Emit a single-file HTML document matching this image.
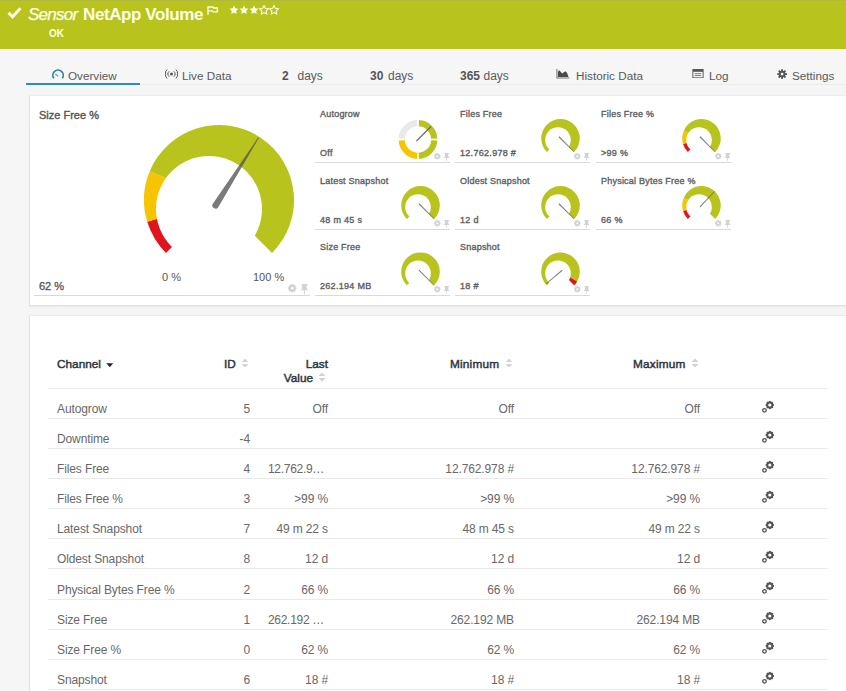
<!DOCTYPE html><html><head><meta charset="utf-8"><style>
*{margin:0;padding:0;box-sizing:border-box}
html,body{width:846px;height:691px;overflow:hidden;background:#f6f6f6;font-family:"Liberation Sans",sans-serif;position:relative}
.a{position:absolute;white-space:nowrap}
.gp{position:absolute}
#hdr{position:absolute;left:0;top:0;width:846px;height:49px;background:#b9c31d;border-top:1px solid #b1b93c}
.tab{position:absolute;top:69px;font-size:11.7px;color:#5a5a5a;line-height:14px}
.tab b{color:#555;font-size:12px}
.panel{position:absolute;background:#fff;border-left:1px solid #e2e2e2;box-shadow:0 1px 0 #e3e3e3,0 2px 1px #e9e9e9,0 -1px 1px #ededed}
.lbl{font-size:9px;color:#5e5e5e;font-weight:normal;-webkit-text-stroke:0.35px #5e5e5e;letter-spacing:0.22px}
.val{font-size:9px;color:#5e5e5e;font-weight:normal;-webkit-text-stroke:0.35px #5e5e5e;letter-spacing:0.3px}
.ln{position:absolute;height:1px;background:#d9d9d9}
.th{position:absolute;font-size:11.8px;font-weight:normal;-webkit-text-stroke:0.45px #2c3440;color:#2c3440;line-height:13.5px}
.td{position:absolute;font-size:12px;color:#686868;white-space:nowrap;letter-spacing:-0.12px}
.r{text-align:right}
</style></head><body>

<div id="hdr">
<svg class="a" style="left:7px;top:6px" width="15" height="12" viewBox="0 0 15 12"><path d="M1.5,5.8 L5.5,9.8 L13.5,1.2" stroke="#fdfde6" stroke-width="3" fill="none"/></svg>
<div class="a" style="left:28px;top:3px;font-size:17px;font-style:italic;color:#fdfde6;-webkit-text-stroke:0.25px #fdfde6;line-height:22px;letter-spacing:-0.75px">Sensor</div>
<div class="a" style="left:83px;top:3px;font-size:17px;font-weight:bold;color:#fdfde6;line-height:22px;letter-spacing:-0.4px">NetApp Volume</div>
<svg class="a" style="left:207px;top:5px" width="12" height="9" viewBox="0 0 12 9"><path d="M1,0.3 V9 M1,1 H5.8 L6.6,2 H10.4 V5.8 H6 L5.2,4.8 H1" stroke="#fdfde6" stroke-width="1.3" fill="none"/></svg>
<div class="a" style="left:49px;top:27px;font-size:10px;font-weight:bold;color:#fdfde6;line-height:12px">OK</div>

<svg class="a" style="left:229px;top:3.5px" width="54" height="11" viewBox="0 0 54 11"><polygon points="5.00,0.60 6.35,3.34 9.37,3.78 7.19,5.91 7.70,8.92 5.00,7.50 2.30,8.92 2.81,5.91 0.63,3.78 3.65,3.34" fill="#fdfde6"/><polygon points="15.00,0.60 16.35,3.34 19.37,3.78 17.19,5.91 17.70,8.92 15.00,7.50 12.30,8.92 12.81,5.91 10.63,3.78 13.65,3.34" fill="#fdfde6"/><polygon points="25.00,0.60 26.35,3.34 29.37,3.78 27.19,5.91 27.70,8.92 25.00,7.50 22.30,8.92 22.81,5.91 20.63,3.78 23.65,3.34" fill="#fdfde6"/><polygon points="35.00,0.60 36.35,3.34 39.37,3.78 37.19,5.91 37.70,8.92 35.00,7.50 32.30,8.92 32.81,5.91 30.63,3.78 33.65,3.34" fill="none" stroke="#fdfde6" stroke-width="1.1"/><polygon points="45.00,0.60 46.35,3.34 49.37,3.78 47.19,5.91 47.70,8.92 45.00,7.50 42.30,8.92 42.81,5.91 40.63,3.78 43.65,3.34" fill="none" stroke="#fdfde6" stroke-width="1.1"/></svg>
</div>

<svg class="a" style="left:51px;top:69px" width="14" height="11" viewBox="0 0 14 11"><path d="M2.8,9.3 A5.2,5.2 0 1 1 11.3,9.3" stroke="#2b82aa" stroke-width="1.7" fill="none"/><path d="M4.3,5 L7.2,7.2" stroke="#5a9fbf" stroke-width="1.1"/></svg>
<div class="tab" style="left:68px">Overview</div>
<div style="position:absolute;left:26px;top:83px;width:114px;height:2px;background:#2a8fbd"></div>
<div style="position:absolute;left:140px;top:84px;width:706px;height:1px;background:#ebebeb"></div>
<svg class="a" style="left:165px;top:69px" width="13" height="10" viewBox="0 0 13 10"><circle cx="6.5" cy="5" r="1.5" fill="#555"/><path d="M4.1,2.3 A3.6,3.6 0 0 0 4.1,7.7 M8.9,2.3 A3.6,3.6 0 0 1 8.9,7.7 M2.1,0.6 A6,6 0 0 0 2.1,9.4 M10.9,0.6 A6,6 0 0 1 10.9,9.4" stroke="#555" stroke-width="1" fill="none"/></svg>
<div class="tab" style="left:182px">Live Data</div>
<div class="tab" style="left:282px"><b>2</b></div><div class="tab" style="left:297.5px;font-size:12px">days</div>
<div class="tab" style="left:370px"><b>30</b></div><div class="tab" style="left:388px;font-size:12px">days</div>
<div class="tab" style="left:460px"><b>365</b></div><div class="tab" style="left:483.5px;font-size:12px">days</div>
<svg class="a" style="left:556px;top:69px" width="14" height="10" viewBox="0 0 14 10"><path d="M0.4,0 V9.6 H13.3 V8.6 H1.5 V0 Z" fill="#777"/><path d="M2,8 V2.8 L3.3,1.2 L6.2,4.6 L9.3,2.3 L11,3.7 L12.3,7.3 V8 Z" fill="#4a4a4a"/></svg>
<div class="tab" style="left:576px">Historic Data</div>
<svg class="a" style="left:692px;top:69px" width="12" height="9.3" viewBox="0 0 12 10"><rect x="0.5" y="0.5" width="11" height="9" fill="none" stroke="#555" stroke-width="1"/><rect x="0.5" y="0.5" width="11" height="2.5" fill="#555"/><path d="M2.5,5 H9.5 M2.5,7 H9.5" stroke="#555" stroke-width="0.8"/></svg>
<div class="tab" style="left:709px">Log</div>
<svg class="a" style="left:777px;top:69px" width="10.2" height="10.2" viewBox="0 0 11 11"><g fill="#555"><circle cx="5.5" cy="5.5" r="3.6"/><rect x="4.5" y="0.3" width="2" height="10.4" transform="rotate(0 5.5 5.5)"/><rect x="4.5" y="0.3" width="2" height="10.4" transform="rotate(45 5.5 5.5)"/><rect x="4.5" y="0.3" width="2" height="10.4" transform="rotate(90 5.5 5.5)"/><rect x="4.5" y="0.3" width="2" height="10.4" transform="rotate(135 5.5 5.5)"/></g><circle cx="5.5" cy="5.5" r="1.5" fill="#f6f6f6"/></svg>
<div class="tab" style="left:792px">Settings</div>

<div class="panel" style="left:29px;top:96px;width:817px;height:209px"></div>
<div class="a" style="left:39px;top:109px;font-size:11px;color:#555;-webkit-text-stroke:0.4px #555;letter-spacing:0px">Size Free %</div>
<svg class="a" style="left:0;top:0" width="846" height="691" viewBox="0 0 846 691">
<path d="M219.00,200.00 L165.97,253.03 A75,75 0 0 1 147.25,221.83 Z" fill="#e1131d"/>
<path d="M219.00,200.00 L147.25,221.83 A75,75 0 0 1 149.71,171.30 Z" fill="#f6c400"/>
<path d="M219.00,200.00 L149.71,171.30 A75,75 0 1 1 272.03,253.03 Z" fill="#b9c31e"/>
<circle cx="209.00" cy="209.00" r="53.00" fill="#fff"/>
<path d="M218.22,207.20 L258.99,137.73 L258.31,137.31 L212.82,203.77 A3.20,3.20 0 0 0 218.22,207.20 Z" fill="#555" fill-opacity="0.78"/>
</svg>
<div class="a" style="left:162px;top:271px;font-size:11px;color:#555">0 %</div>
<div class="a" style="left:253px;top:271px;font-size:11px;color:#555">100 %</div>
<div class="a" style="left:39px;top:280px;font-size:11px;color:#555;-webkit-text-stroke:0.3px #555">62 %</div>
<svg class="gp" style="left:288px;top:283.5px" width="22.1" height="10.4" viewBox="0 0 17 8"><g fill="#d2d2d2"><circle cx="3.25" cy="3.25" r="2.5"/><rect x="2.45" y="0" width="1.6" height="6.5" transform="rotate(0 3.25 3.25)"/><rect x="2.45" y="0" width="1.6" height="6.5" transform="rotate(45 3.25 3.25)"/><rect x="2.45" y="0" width="1.6" height="6.5" transform="rotate(90 3.25 3.25)"/><rect x="2.45" y="0" width="1.6" height="6.5" transform="rotate(135 3.25 3.25)"/></g><circle cx="3.25" cy="3.25" r="1.0" fill="#fff"/><path d="M10.6,0 h4.4 v1.1 h-0.7 v2.3 l1.3,1.5 h-2.6 v2.9 h-0.8 v-2.9 h-2.6 l1.3,-1.5 v-2.3 h-0.7 z" fill="#d2d2d2"/></svg>
<div class="ln" style="left:34px;top:295px;width:276px"></div>
<div class="a lbl" style="left:320px;top:108.5px">Autogrow</div>
<div class="a val" style="left:320px;top:147.7px">Off</div>
<svg class="gp" style="left:433.5px;top:152.5px" width="17.0" height="8.0" viewBox="0 0 17 8"><g fill="#d2d2d2"><circle cx="3.25" cy="3.25" r="2.5"/><rect x="2.45" y="0" width="1.6" height="6.5" transform="rotate(0 3.25 3.25)"/><rect x="2.45" y="0" width="1.6" height="6.5" transform="rotate(45 3.25 3.25)"/><rect x="2.45" y="0" width="1.6" height="6.5" transform="rotate(90 3.25 3.25)"/><rect x="2.45" y="0" width="1.6" height="6.5" transform="rotate(135 3.25 3.25)"/></g><circle cx="3.25" cy="3.25" r="1.0" fill="#fff"/><path d="M10.6,0 h4.4 v1.1 h-0.7 v2.3 l1.3,1.5 h-2.6 v2.9 h-0.8 v-2.9 h-2.6 l1.3,-1.5 v-2.3 h-0.7 z" fill="#d2d2d2"/></svg>
<div class="ln" style="left:315px;top:162px;width:135px"></div>
<div class="a lbl" style="left:460px;top:108.5px">Files Free</div>
<div class="a val" style="left:460px;top:147.7px">12.762.978 #</div>
<svg class="gp" style="left:573.5px;top:152.5px" width="17.0" height="8.0" viewBox="0 0 17 8"><g fill="#d2d2d2"><circle cx="3.25" cy="3.25" r="2.5"/><rect x="2.45" y="0" width="1.6" height="6.5" transform="rotate(0 3.25 3.25)"/><rect x="2.45" y="0" width="1.6" height="6.5" transform="rotate(45 3.25 3.25)"/><rect x="2.45" y="0" width="1.6" height="6.5" transform="rotate(90 3.25 3.25)"/><rect x="2.45" y="0" width="1.6" height="6.5" transform="rotate(135 3.25 3.25)"/></g><circle cx="3.25" cy="3.25" r="1.0" fill="#fff"/><path d="M10.6,0 h4.4 v1.1 h-0.7 v2.3 l1.3,1.5 h-2.6 v2.9 h-0.8 v-2.9 h-2.6 l1.3,-1.5 v-2.3 h-0.7 z" fill="#d2d2d2"/></svg>
<div class="ln" style="left:455px;top:162px;width:135px"></div>
<div class="a lbl" style="left:601px;top:108.5px">Files Free %</div>
<div class="a val" style="left:601px;top:147.7px">>99 %</div>
<svg class="gp" style="left:714.5px;top:152.5px" width="17.0" height="8.0" viewBox="0 0 17 8"><g fill="#d2d2d2"><circle cx="3.25" cy="3.25" r="2.5"/><rect x="2.45" y="0" width="1.6" height="6.5" transform="rotate(0 3.25 3.25)"/><rect x="2.45" y="0" width="1.6" height="6.5" transform="rotate(45 3.25 3.25)"/><rect x="2.45" y="0" width="1.6" height="6.5" transform="rotate(90 3.25 3.25)"/><rect x="2.45" y="0" width="1.6" height="6.5" transform="rotate(135 3.25 3.25)"/></g><circle cx="3.25" cy="3.25" r="1.0" fill="#fff"/><path d="M10.6,0 h4.4 v1.1 h-0.7 v2.3 l1.3,1.5 h-2.6 v2.9 h-0.8 v-2.9 h-2.6 l1.3,-1.5 v-2.3 h-0.7 z" fill="#d2d2d2"/></svg>
<div class="ln" style="left:596px;top:162px;width:135px"></div>
<div class="a lbl" style="left:320px;top:175.5px">Latest Snapshot</div>
<div class="a val" style="left:320px;top:214.7px">48 m 45 s</div>
<svg class="gp" style="left:433.5px;top:219.5px" width="17.0" height="8.0" viewBox="0 0 17 8"><g fill="#d2d2d2"><circle cx="3.25" cy="3.25" r="2.5"/><rect x="2.45" y="0" width="1.6" height="6.5" transform="rotate(0 3.25 3.25)"/><rect x="2.45" y="0" width="1.6" height="6.5" transform="rotate(45 3.25 3.25)"/><rect x="2.45" y="0" width="1.6" height="6.5" transform="rotate(90 3.25 3.25)"/><rect x="2.45" y="0" width="1.6" height="6.5" transform="rotate(135 3.25 3.25)"/></g><circle cx="3.25" cy="3.25" r="1.0" fill="#fff"/><path d="M10.6,0 h4.4 v1.1 h-0.7 v2.3 l1.3,1.5 h-2.6 v2.9 h-0.8 v-2.9 h-2.6 l1.3,-1.5 v-2.3 h-0.7 z" fill="#d2d2d2"/></svg>
<div class="ln" style="left:315px;top:229px;width:135px"></div>
<div class="a lbl" style="left:460px;top:175.5px">Oldest Snapshot</div>
<div class="a val" style="left:460px;top:214.7px">12 d</div>
<svg class="gp" style="left:573.5px;top:219.5px" width="17.0" height="8.0" viewBox="0 0 17 8"><g fill="#d2d2d2"><circle cx="3.25" cy="3.25" r="2.5"/><rect x="2.45" y="0" width="1.6" height="6.5" transform="rotate(0 3.25 3.25)"/><rect x="2.45" y="0" width="1.6" height="6.5" transform="rotate(45 3.25 3.25)"/><rect x="2.45" y="0" width="1.6" height="6.5" transform="rotate(90 3.25 3.25)"/><rect x="2.45" y="0" width="1.6" height="6.5" transform="rotate(135 3.25 3.25)"/></g><circle cx="3.25" cy="3.25" r="1.0" fill="#fff"/><path d="M10.6,0 h4.4 v1.1 h-0.7 v2.3 l1.3,1.5 h-2.6 v2.9 h-0.8 v-2.9 h-2.6 l1.3,-1.5 v-2.3 h-0.7 z" fill="#d2d2d2"/></svg>
<div class="ln" style="left:455px;top:229px;width:135px"></div>
<div class="a lbl" style="left:601px;top:175.5px">Physical Bytes Free %</div>
<div class="a val" style="left:601px;top:214.7px">66 %</div>
<svg class="gp" style="left:714.5px;top:219.5px" width="17.0" height="8.0" viewBox="0 0 17 8"><g fill="#d2d2d2"><circle cx="3.25" cy="3.25" r="2.5"/><rect x="2.45" y="0" width="1.6" height="6.5" transform="rotate(0 3.25 3.25)"/><rect x="2.45" y="0" width="1.6" height="6.5" transform="rotate(45 3.25 3.25)"/><rect x="2.45" y="0" width="1.6" height="6.5" transform="rotate(90 3.25 3.25)"/><rect x="2.45" y="0" width="1.6" height="6.5" transform="rotate(135 3.25 3.25)"/></g><circle cx="3.25" cy="3.25" r="1.0" fill="#fff"/><path d="M10.6,0 h4.4 v1.1 h-0.7 v2.3 l1.3,1.5 h-2.6 v2.9 h-0.8 v-2.9 h-2.6 l1.3,-1.5 v-2.3 h-0.7 z" fill="#d2d2d2"/></svg>
<div class="ln" style="left:596px;top:229px;width:135px"></div>
<div class="a lbl" style="left:320px;top:241.89999999999998px">Size Free</div>
<div class="a val" style="left:320px;top:281.09999999999997px">262.194 MB</div>
<svg class="gp" style="left:433.5px;top:285.9px" width="17.0" height="8.0" viewBox="0 0 17 8"><g fill="#d2d2d2"><circle cx="3.25" cy="3.25" r="2.5"/><rect x="2.45" y="0" width="1.6" height="6.5" transform="rotate(0 3.25 3.25)"/><rect x="2.45" y="0" width="1.6" height="6.5" transform="rotate(45 3.25 3.25)"/><rect x="2.45" y="0" width="1.6" height="6.5" transform="rotate(90 3.25 3.25)"/><rect x="2.45" y="0" width="1.6" height="6.5" transform="rotate(135 3.25 3.25)"/></g><circle cx="3.25" cy="3.25" r="1.0" fill="#fff"/><path d="M10.6,0 h4.4 v1.1 h-0.7 v2.3 l1.3,1.5 h-2.6 v2.9 h-0.8 v-2.9 h-2.6 l1.3,-1.5 v-2.3 h-0.7 z" fill="#d2d2d2"/></svg>
<div class="ln" style="left:315px;top:295px;width:135px"></div>
<div class="a lbl" style="left:460px;top:241.89999999999998px">Snapshot</div>
<div class="a val" style="left:460px;top:281.09999999999997px">18 #</div>
<svg class="gp" style="left:573.5px;top:285.9px" width="17.0" height="8.0" viewBox="0 0 17 8"><g fill="#d2d2d2"><circle cx="3.25" cy="3.25" r="2.5"/><rect x="2.45" y="0" width="1.6" height="6.5" transform="rotate(0 3.25 3.25)"/><rect x="2.45" y="0" width="1.6" height="6.5" transform="rotate(45 3.25 3.25)"/><rect x="2.45" y="0" width="1.6" height="6.5" transform="rotate(90 3.25 3.25)"/><rect x="2.45" y="0" width="1.6" height="6.5" transform="rotate(135 3.25 3.25)"/></g><circle cx="3.25" cy="3.25" r="1.0" fill="#fff"/><path d="M10.6,0 h4.4 v1.1 h-0.7 v2.3 l1.3,1.5 h-2.6 v2.9 h-0.8 v-2.9 h-2.6 l1.3,-1.5 v-2.3 h-0.7 z" fill="#d2d2d2"/></svg>
<div class="ln" style="left:455px;top:295px;width:135px"></div>
<svg class="a" style="left:0;top:0" width="846" height="691" viewBox="0 0 846 691"><path d="M398.62,138.55 A19.4,19.4 0 0 1 417.05,120.12 L417.36,126.32 A13.2,13.2 0 0 0 404.82,138.86 Z" fill="#e9e9e9"/>
<path d="M418.95,120.12 A19.4,19.4 0 0 1 437.38,138.55 L431.18,138.86 A13.2,13.2 0 0 0 418.64,126.32 Z" fill="#b9c31e"/>
<path d="M437.38,140.45 A19.4,19.4 0 0 1 418.95,158.88 L418.64,152.68 A13.2,13.2 0 0 0 431.18,140.14 Z" fill="#b9c31e"/>
<path d="M417.05,158.88 A19.4,19.4 0 0 1 398.62,140.45 L404.82,140.14 A13.2,13.2 0 0 0 417.36,152.68 Z" fill="#f6c400"/>
<path d="M416.50,141.00 L431.00,126.50" stroke="#666" stroke-width="1.1"/>
<path d="M560.50,138.30 L546.85,151.95 A19.3,19.3 0 1 1 574.15,151.95 Z" fill="#b9c31e"/>
<circle cx="558.00" cy="140.00" r="12.80" fill="#fff"/>
<path d="M558.80,137.43 L573.68,152.05 L574.25,151.48 L559.63,136.60 A0.58,0.58 0 0 0 558.80,137.43 Z" fill="#6a6a6a" fill-opacity="0.85"/>
<path d="M701.50,138.30 L687.85,151.95 A19.3,19.3 0 0 1 683.04,143.92 Z" fill="#e1131d"/>
<path d="M701.50,138.30 L683.04,143.92 A19.3,19.3 0 0 1 683.67,130.91 Z" fill="#f6c400"/>
<path d="M701.50,138.30 L683.67,130.91 A19.3,19.3 0 1 1 715.15,151.95 Z" fill="#b9c31e"/>
<circle cx="699.00" cy="140.00" r="12.80" fill="#fff"/>
<path d="M699.80,137.43 L714.68,152.05 L715.25,151.48 L700.63,136.60 A0.58,0.58 0 0 0 699.80,137.43 Z" fill="#6a6a6a" fill-opacity="0.85"/>
<path d="M420.50,205.30 L406.85,218.95 A19.3,19.3 0 1 1 434.15,218.95 Z" fill="#b9c31e"/>
<circle cx="418.00" cy="207.00" r="12.80" fill="#fff"/>
<path d="M418.80,204.43 L433.68,219.05 L434.25,218.48 L419.63,203.60 A0.58,0.58 0 0 0 418.80,204.43 Z" fill="#6a6a6a" fill-opacity="0.85"/>
<path d="M560.50,205.30 L546.85,218.95 A19.3,19.3 0 1 1 574.15,218.95 Z" fill="#b9c31e"/>
<circle cx="558.00" cy="207.00" r="12.80" fill="#fff"/>
<path d="M558.80,204.43 L573.68,219.05 L574.25,218.48 L559.63,203.60 A0.58,0.58 0 0 0 558.80,204.43 Z" fill="#6a6a6a" fill-opacity="0.85"/>
<path d="M701.50,205.30 L687.85,218.95 A19.3,19.3 0 0 1 683.04,210.92 Z" fill="#e1131d"/>
<path d="M701.50,205.30 L683.04,210.92 A19.3,19.3 0 0 1 683.67,197.91 Z" fill="#f6c400"/>
<path d="M701.50,205.30 L683.67,197.91 A19.3,19.3 0 1 1 715.15,218.95 Z" fill="#b9c31e"/>
<circle cx="699.00" cy="207.00" r="12.80" fill="#fff"/>
<path d="M700.68,207.03 L714.83,191.69 L714.24,191.15 L699.83,206.23 A0.58,0.58 0 0 0 700.68,207.03 Z" fill="#6a6a6a" fill-opacity="0.85"/>
<path d="M420.50,271.70 L406.85,285.35 A19.3,19.3 0 1 1 434.15,285.35 Z" fill="#b9c31e"/>
<circle cx="418.00" cy="273.40" r="12.80" fill="#fff"/>
<path d="M418.80,270.83 L433.68,285.45 L434.25,284.88 L419.63,270.00 A0.58,0.58 0 0 0 418.80,270.83 Z" fill="#6a6a6a" fill-opacity="0.85"/>
<path d="M560.50,271.70 L546.85,285.35 A19.3,19.3 0 1 1 577.19,281.39 Z" fill="#b9c31e"/>
<path d="M560.50,271.70 L577.19,281.39 A19.3,19.3 0 0 1 574.15,285.35 Z" fill="#e1131d"/>
<circle cx="558.00" cy="273.40" r="12.80" fill="#fff"/>
<path d="M561.51,270.08 L545.69,283.67 L546.20,284.28 L562.27,270.97 A0.58,0.58 0 0 0 561.51,270.08 Z" fill="#6a6a6a" fill-opacity="0.85"/></svg>
<div class="panel" style="left:29px;top:316px;width:817px;height:400px"></div>
<div class="th" style="left:57px;top:358px">Channel</div>
<svg class="a" style="left:106px;top:363px" width="8" height="5" viewBox="0 0 8 5"><path d="M0.3,0.3 H7.2 L3.75,4.3 Z" fill="#1f2630"/></svg>
<div class="th" style="left:224px;top:358px">ID</div>
<svg class="a" style="left:241px;top:358px" width="8" height="10" viewBox="0 0 8 10"><path d="M4,0.5 L7.5,4 H0.5 Z M4,9.5 L7.5,6 H0.5 Z" fill="#d3d3d3"/></svg>
<div class="th r" style="left:228px;top:358px;width:100px">Last</div>
<div class="th r" style="left:213px;top:371.5px;width:100px">Value</div>
<svg class="a" style="left:318px;top:371.5px" width="8" height="10" viewBox="0 0 8 10"><path d="M4,0.5 L7.5,4 H0.5 Z M4,9.5 L7.5,6 H0.5 Z" fill="#d3d3d3"/></svg>
<div class="th" style="left:450px;top:358px;letter-spacing:0.2px">Minimum</div>
<svg class="a" style="left:505px;top:358px" width="8" height="10" viewBox="0 0 8 10"><path d="M4,0.5 L7.5,4 H0.5 Z M4,9.5 L7.5,6 H0.5 Z" fill="#d3d3d3"/></svg>
<div class="th" style="left:633px;top:358px;letter-spacing:0.2px">Maximum</div>
<svg class="a" style="left:691px;top:358px" width="8" height="10" viewBox="0 0 8 10"><path d="M4,0.5 L7.5,4 H0.5 Z M4,9.5 L7.5,6 H0.5 Z" fill="#d3d3d3"/></svg>
<div class="ln" style="left:48px;top:388px;width:780px;background:#eaeaea"></div>
<div class="td" style="left:57px;top:402px">Autogrow</div>
<div class="td r" style="left:150px;top:402px;width:100px">5</div>
<div class="td r" style="left:228px;top:402px;width:100px">Off</div>
<div class="td r" style="left:380px;top:402px;width:134px">Off</div>
<div class="td r" style="left:566px;top:402px;width:134px">Off</div>
<svg class="a" style="left:760px;top:400.2px" width="16" height="14" viewBox="0 0 16 14"><g fill="#555"><circle cx="9.8" cy="5" r="3.55"/><rect x="8.85" y="0.9" width="1.9" height="8.2" transform="rotate(0 9.8 5)"/><rect x="8.85" y="0.9" width="1.9" height="8.2" transform="rotate(45 9.8 5)"/><rect x="8.85" y="0.9" width="1.9" height="8.2" transform="rotate(90 9.8 5)"/><rect x="8.85" y="0.9" width="1.9" height="8.2" transform="rotate(135 9.8 5)"/></g><circle cx="9.8" cy="5" r="1.6" fill="#fff"/><circle cx="4.5" cy="10.3" r="1.75" fill="none" stroke="#555" stroke-width="1.3"/></svg>
<div class="ln" style="left:48px;top:418px;width:780px;background:#eaeaea"></div>
<div class="td" style="left:57px;top:432px">Downtime</div>
<div class="td r" style="left:150px;top:432px;width:100px">-4</div>
<div class="td r" style="left:228px;top:432px;width:100px"></div>
<div class="td r" style="left:380px;top:432px;width:134px"></div>
<div class="td r" style="left:566px;top:432px;width:134px"></div>
<svg class="a" style="left:760px;top:430.2px" width="16" height="14" viewBox="0 0 16 14"><g fill="#555"><circle cx="9.8" cy="5" r="3.55"/><rect x="8.85" y="0.9" width="1.9" height="8.2" transform="rotate(0 9.8 5)"/><rect x="8.85" y="0.9" width="1.9" height="8.2" transform="rotate(45 9.8 5)"/><rect x="8.85" y="0.9" width="1.9" height="8.2" transform="rotate(90 9.8 5)"/><rect x="8.85" y="0.9" width="1.9" height="8.2" transform="rotate(135 9.8 5)"/></g><circle cx="9.8" cy="5" r="1.6" fill="#fff"/><circle cx="4.5" cy="10.3" r="1.75" fill="none" stroke="#555" stroke-width="1.3"/></svg>
<div class="ln" style="left:48px;top:448px;width:780px;background:#eaeaea"></div>
<div class="td" style="left:57px;top:462px">Files Free</div>
<div class="td r" style="left:150px;top:462px;width:100px">4</div>
<div class="td" style="left:268px;top:462px;letter-spacing:-0.3px">12.762.9…</div>
<div class="td r" style="left:380px;top:462px;width:134px">12.762.978 #</div>
<div class="td r" style="left:566px;top:462px;width:134px">12.762.978 #</div>
<svg class="a" style="left:760px;top:460.2px" width="16" height="14" viewBox="0 0 16 14"><g fill="#555"><circle cx="9.8" cy="5" r="3.55"/><rect x="8.85" y="0.9" width="1.9" height="8.2" transform="rotate(0 9.8 5)"/><rect x="8.85" y="0.9" width="1.9" height="8.2" transform="rotate(45 9.8 5)"/><rect x="8.85" y="0.9" width="1.9" height="8.2" transform="rotate(90 9.8 5)"/><rect x="8.85" y="0.9" width="1.9" height="8.2" transform="rotate(135 9.8 5)"/></g><circle cx="9.8" cy="5" r="1.6" fill="#fff"/><circle cx="4.5" cy="10.3" r="1.75" fill="none" stroke="#555" stroke-width="1.3"/></svg>
<div class="ln" style="left:48px;top:478px;width:780px;background:#eaeaea"></div>
<div class="td" style="left:57px;top:492px">Files Free %</div>
<div class="td r" style="left:150px;top:492px;width:100px">3</div>
<div class="td r" style="left:228px;top:492px;width:100px">>99 %</div>
<div class="td r" style="left:380px;top:492px;width:134px">>99 %</div>
<div class="td r" style="left:566px;top:492px;width:134px">>99 %</div>
<svg class="a" style="left:760px;top:490.2px" width="16" height="14" viewBox="0 0 16 14"><g fill="#555"><circle cx="9.8" cy="5" r="3.55"/><rect x="8.85" y="0.9" width="1.9" height="8.2" transform="rotate(0 9.8 5)"/><rect x="8.85" y="0.9" width="1.9" height="8.2" transform="rotate(45 9.8 5)"/><rect x="8.85" y="0.9" width="1.9" height="8.2" transform="rotate(90 9.8 5)"/><rect x="8.85" y="0.9" width="1.9" height="8.2" transform="rotate(135 9.8 5)"/></g><circle cx="9.8" cy="5" r="1.6" fill="#fff"/><circle cx="4.5" cy="10.3" r="1.75" fill="none" stroke="#555" stroke-width="1.3"/></svg>
<div class="ln" style="left:48px;top:508px;width:780px;background:#eaeaea"></div>
<div class="td" style="left:57px;top:522px">Latest Snapshot</div>
<div class="td r" style="left:150px;top:522px;width:100px">7</div>
<div class="td r" style="left:228px;top:522px;width:100px">49 m 22 s</div>
<div class="td r" style="left:380px;top:522px;width:134px">48 m 45 s</div>
<div class="td r" style="left:566px;top:522px;width:134px">49 m 22 s</div>
<svg class="a" style="left:760px;top:520.2px" width="16" height="14" viewBox="0 0 16 14"><g fill="#555"><circle cx="9.8" cy="5" r="3.55"/><rect x="8.85" y="0.9" width="1.9" height="8.2" transform="rotate(0 9.8 5)"/><rect x="8.85" y="0.9" width="1.9" height="8.2" transform="rotate(45 9.8 5)"/><rect x="8.85" y="0.9" width="1.9" height="8.2" transform="rotate(90 9.8 5)"/><rect x="8.85" y="0.9" width="1.9" height="8.2" transform="rotate(135 9.8 5)"/></g><circle cx="9.8" cy="5" r="1.6" fill="#fff"/><circle cx="4.5" cy="10.3" r="1.75" fill="none" stroke="#555" stroke-width="1.3"/></svg>
<div class="ln" style="left:48px;top:538px;width:780px;background:#eaeaea"></div>
<div class="td" style="left:57px;top:552px">Oldest Snapshot</div>
<div class="td r" style="left:150px;top:552px;width:100px">8</div>
<div class="td r" style="left:228px;top:552px;width:100px">12 d</div>
<div class="td r" style="left:380px;top:552px;width:134px">12 d</div>
<div class="td r" style="left:566px;top:552px;width:134px">12 d</div>
<svg class="a" style="left:760px;top:550.2px" width="16" height="14" viewBox="0 0 16 14"><g fill="#555"><circle cx="9.8" cy="5" r="3.55"/><rect x="8.85" y="0.9" width="1.9" height="8.2" transform="rotate(0 9.8 5)"/><rect x="8.85" y="0.9" width="1.9" height="8.2" transform="rotate(45 9.8 5)"/><rect x="8.85" y="0.9" width="1.9" height="8.2" transform="rotate(90 9.8 5)"/><rect x="8.85" y="0.9" width="1.9" height="8.2" transform="rotate(135 9.8 5)"/></g><circle cx="9.8" cy="5" r="1.6" fill="#fff"/><circle cx="4.5" cy="10.3" r="1.75" fill="none" stroke="#555" stroke-width="1.3"/></svg>
<div class="ln" style="left:48px;top:568px;width:780px;background:#eaeaea"></div>
<div class="td" style="left:57px;top:583px">Physical Bytes Free %</div>
<div class="td r" style="left:150px;top:583px;width:100px">2</div>
<div class="td r" style="left:228px;top:583px;width:100px">66 %</div>
<div class="td r" style="left:380px;top:583px;width:134px">66 %</div>
<div class="td r" style="left:566px;top:583px;width:134px">66 %</div>
<svg class="a" style="left:760px;top:581.2px" width="16" height="14" viewBox="0 0 16 14"><g fill="#555"><circle cx="9.8" cy="5" r="3.55"/><rect x="8.85" y="0.9" width="1.9" height="8.2" transform="rotate(0 9.8 5)"/><rect x="8.85" y="0.9" width="1.9" height="8.2" transform="rotate(45 9.8 5)"/><rect x="8.85" y="0.9" width="1.9" height="8.2" transform="rotate(90 9.8 5)"/><rect x="8.85" y="0.9" width="1.9" height="8.2" transform="rotate(135 9.8 5)"/></g><circle cx="9.8" cy="5" r="1.6" fill="#fff"/><circle cx="4.5" cy="10.3" r="1.75" fill="none" stroke="#555" stroke-width="1.3"/></svg>
<div class="ln" style="left:48px;top:599px;width:780px;background:#eaeaea"></div>
<div class="td" style="left:57px;top:613px">Size Free</div>
<div class="td r" style="left:150px;top:613px;width:100px">1</div>
<div class="td" style="left:268px;top:613px;letter-spacing:-0.3px">262.192 …</div>
<div class="td r" style="left:380px;top:613px;width:134px">262.192 MB</div>
<div class="td r" style="left:566px;top:613px;width:134px">262.194 MB</div>
<svg class="a" style="left:760px;top:611.2px" width="16" height="14" viewBox="0 0 16 14"><g fill="#555"><circle cx="9.8" cy="5" r="3.55"/><rect x="8.85" y="0.9" width="1.9" height="8.2" transform="rotate(0 9.8 5)"/><rect x="8.85" y="0.9" width="1.9" height="8.2" transform="rotate(45 9.8 5)"/><rect x="8.85" y="0.9" width="1.9" height="8.2" transform="rotate(90 9.8 5)"/><rect x="8.85" y="0.9" width="1.9" height="8.2" transform="rotate(135 9.8 5)"/></g><circle cx="9.8" cy="5" r="1.6" fill="#fff"/><circle cx="4.5" cy="10.3" r="1.75" fill="none" stroke="#555" stroke-width="1.3"/></svg>
<div class="ln" style="left:48px;top:629px;width:780px;background:#eaeaea"></div>
<div class="td" style="left:57px;top:643px">Size Free %</div>
<div class="td r" style="left:150px;top:643px;width:100px">0</div>
<div class="td r" style="left:228px;top:643px;width:100px">62 %</div>
<div class="td r" style="left:380px;top:643px;width:134px">62 %</div>
<div class="td r" style="left:566px;top:643px;width:134px">62 %</div>
<svg class="a" style="left:760px;top:641.2px" width="16" height="14" viewBox="0 0 16 14"><g fill="#555"><circle cx="9.8" cy="5" r="3.55"/><rect x="8.85" y="0.9" width="1.9" height="8.2" transform="rotate(0 9.8 5)"/><rect x="8.85" y="0.9" width="1.9" height="8.2" transform="rotate(45 9.8 5)"/><rect x="8.85" y="0.9" width="1.9" height="8.2" transform="rotate(90 9.8 5)"/><rect x="8.85" y="0.9" width="1.9" height="8.2" transform="rotate(135 9.8 5)"/></g><circle cx="9.8" cy="5" r="1.6" fill="#fff"/><circle cx="4.5" cy="10.3" r="1.75" fill="none" stroke="#555" stroke-width="1.3"/></svg>
<div class="ln" style="left:48px;top:659px;width:780px;background:#eaeaea"></div>
<div class="td" style="left:57px;top:673px">Snapshot</div>
<div class="td r" style="left:150px;top:673px;width:100px">6</div>
<div class="td r" style="left:228px;top:673px;width:100px">18 #</div>
<div class="td r" style="left:380px;top:673px;width:134px">18 #</div>
<div class="td r" style="left:566px;top:673px;width:134px">18 #</div>
<svg class="a" style="left:760px;top:671.2px" width="16" height="14" viewBox="0 0 16 14"><g fill="#555"><circle cx="9.8" cy="5" r="3.55"/><rect x="8.85" y="0.9" width="1.9" height="8.2" transform="rotate(0 9.8 5)"/><rect x="8.85" y="0.9" width="1.9" height="8.2" transform="rotate(45 9.8 5)"/><rect x="8.85" y="0.9" width="1.9" height="8.2" transform="rotate(90 9.8 5)"/><rect x="8.85" y="0.9" width="1.9" height="8.2" transform="rotate(135 9.8 5)"/></g><circle cx="9.8" cy="5" r="1.6" fill="#fff"/><circle cx="4.5" cy="10.3" r="1.75" fill="none" stroke="#555" stroke-width="1.3"/></svg>
<div class="ln" style="left:48px;top:689px;width:780px;background:#eaeaea"></div>
</body></html>
